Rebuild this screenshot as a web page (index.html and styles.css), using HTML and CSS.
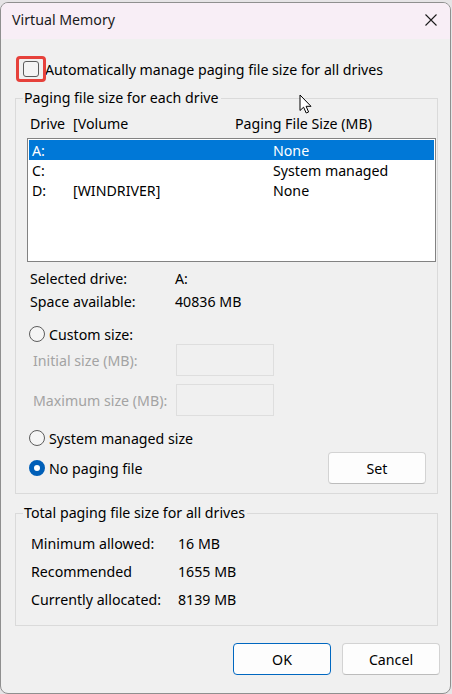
FILE: index.html
```html
<!DOCTYPE html>
<html lang="en">
<head>
<meta charset="utf-8">
<title>Virtual Memory</title>
<link rel="stylesheet" href="styles.css">
</head>
<body>
<div class="window">
  <div class="titlebar">
    <span class="title">Virtual Memory</span>
    <svg class="close" width="14" height="14" viewBox="0 0 14 14"><path d="M1.5 1.5 L12.5 12.5 M12.5 1.5 L1.5 12.5" stroke="#1b1b1b" stroke-width="1.1" fill="none"/></svg>
  </div>
  <div class="content">
    <div class="auto-row">
      <span class="checkbox"><span class="highlight"></span></span>
      <span class="auto-label">Automatically manage paging file size for all drives</span>
    </div>

    <fieldset class="group group-drives">
      <legend>Paging file size for each drive</legend>
      <div class="group-body">
        <div class="list-head">
          <span class="col-drive">Drive</span>
          <span class="col-vol">[Volume</span>
          <span class="col-size">Paging File Size (MB)</span>
        </div>
        <div class="listbox">
          <div class="list-row selected"><span class="c1">A:</span><span class="c2"></span><span class="c3">None</span></div>
          <div class="list-row"><span class="c1">C:</span><span class="c2"></span><span class="c3">System managed</span></div>
          <div class="list-row"><span class="c1">D:</span><span class="c2">[WINDRIVER]</span><span class="c3">None</span></div>
        </div>
        <div class="info">
          <div class="info-row"><span class="info-label">Selected drive:</span><span>A:</span></div>
          <div class="info-row"><span class="info-label">Space available:</span><span>40836 MB</span></div>
        </div>
        <div class="radio-row custom"><span class="radio"></span><span>Custom size:</span></div>
        <div class="field-row first"><span class="field-label">Initial size (MB):</span><span class="field-box"></span></div>
        <div class="field-row"><span class="field-label">Maximum size (MB):</span><span class="field-box"></span></div>
        <div class="radio-row sysman"><span class="radio"></span><span>System managed size</span></div>
        <div class="radio-row nopage">
          <span class="radio checked"></span><span class="grow">No paging file</span>
          <button class="btn set">Set</button>
        </div>
      </div>
    </fieldset>

    <fieldset class="group group-total">
      <legend>Total paging file size for all drives</legend>
      <div class="group-body total-body">
        <div class="total-row"><span class="total-label">Minimum allowed:</span><span>16 MB</span></div>
        <div class="total-row"><span class="total-label">Recommended</span><span>1655 MB</span></div>
        <div class="total-row"><span class="total-label">Currently allocated:</span><span>8139 MB</span></div>
      </div>
    </fieldset>

    <div class="actions">
      <button class="btn default">OK</button>
      <button class="btn">Cancel</button>
    </div>
  </div>
  <svg class="cursor" width="14" height="21" viewBox="0 0 14 21"><path d="M1 1 L1 16.5 L4.6 13.2 L7.2 19 L9.6 18 L7.1 12.3 L12 12.3 Z" fill="#fff" stroke="#000" stroke-width="1" stroke-linejoin="round"/></svg>
</div>
</body>
</html>
```

FILE: styles.css
```css
* { box-sizing: border-box; }
html, body { margin: 0; padding: 0; }
body {
  background: #e6e4e6;
  width: 452px;
  height: 694px;
  overflow: hidden;
  font-family: "Noto Sans", "Open Sans", sans-serif;
  font-size: 14.2px;
  color: #000;
}
.window {
  position: relative;
  margin-top: 2px;
  width: 451px;
  height: 692px;
  background: #f0f0f0;
  border: 1px solid #8f8f8f;
  border-radius: 8px;
  overflow: hidden;
}
.titlebar {
  height: 36px;
  background: #f8eef6;
  display: flex;
  align-items: center;
  justify-content: space-between;
  padding: 0 12px 3px 11px;
}
.title { color: #1a1a1a; }
.close { display: block; margin-top: 1px; }
.content { padding: 18px 12px 0 14px; }

.auto-row {
  height: 24px;
  display: flex;
  align-items: center;
  padding-left: 8px;
  margin-bottom: 7px;
}
.checkbox {
  position: relative;
  width: 16px;
  height: 16px;
  border: 1px solid #5c5c5c;
  border-radius: 3px;
  background: #f4f4f4;
  margin-right: 6px;
  flex: none;
}
.highlight {
  position: absolute;
  left: -8px;
  top: -6px;
  width: 30px;
  height: 26px;
  border: 3px solid #e6413b;
  border-radius: 4px;
}
.group {
  margin: 0;
  padding: 0;
  border: 1px solid #dadada;
  min-width: 0;
}
.group legend {
  margin-left: 7px;
  padding: 0 2px 0 1px;
  line-height: 20px;
  height: 20px;
}
.group-body { padding: 6px 0 9px 11px; }
.list-head {
  height: 20px;
  line-height: 20px;
  display: flex;
  padding-left: 3px;
}
.col-drive { width: 43px; }
.col-vol { width: 162px; }
.listbox {
  margin-top: 4px;
  width: 409px;
  height: 124px;
  background: #fff;
  border: 1px solid #828282;
  padding: 1px;
}
.list-row {
  height: 20px;
  line-height: 21px;
  display: flex;
  padding-left: 3px;
}
.list-row.selected { background: #0078d7; color: #fff; }
.c1 { width: 41px; }
.c2 { width: 200px; }

.info { margin-top: 5px; padding-left: 3px; }
.info-row { height: 23px; line-height: 23px; display: flex; }
.info-label { width: 145px; }

.radio-row {
  display: flex;
  align-items: center;
  height: 22px;
  padding-left: 2px;
}
.radio-row.custom { margin-top: 10px; }
.radio-row.sysman { margin-top: 11px; }
.radio-row.nopage { margin-top: 3px; height: 32px; }
.radio {
  width: 16px;
  height: 16px;
  border-radius: 50%;
  border: 1px solid #5c5c5c;
  background: #f5f5f5;
  margin-right: 4px;
  flex: none;
}
.radio.checked {
  border: 5px solid #005fb8;
  background: #fff;
}
.grow { flex: 1; }

.field-row {
  display: flex;
  align-items: center;
  height: 32px;
  margin-top: 8px;
  padding-left: 6px;
  color: #a3a3a3;
}
.field-row.first { margin-top: -1px; }
.field-label { width: 143px; }
.field-box {
  width: 98px;
  height: 32px;
  border: 1px solid #dedede;
  background: #f0f0f0;
}

.btn {
  font-family: inherit;
  font-size: 14.2px;
  color: #000;
  width: 98px;
  height: 32px;
  background: #fdfdfd;
  border: 1px solid #d3d3d3;
  border-bottom-color: #bcbcbc;
  border-radius: 4px;
  padding: 0;
}
.btn.set { margin-right: 11px; }
.btn.default { border: 1px solid #0067c0; }

.group-total { margin-top: 9px; }
.total-body { padding: 7px 0 11px 15px; }
.total-row { height: 28px; line-height: 28px; display: flex; }
.total-label { width: 147px; }

.actions {
  display: flex;
  justify-content: flex-end;
  gap: 11px;
  margin-top: 17px;
  margin-right: -2px;
}
.cursor {
  position: absolute;
  left: 298px;
  top: 91px;
}
```
